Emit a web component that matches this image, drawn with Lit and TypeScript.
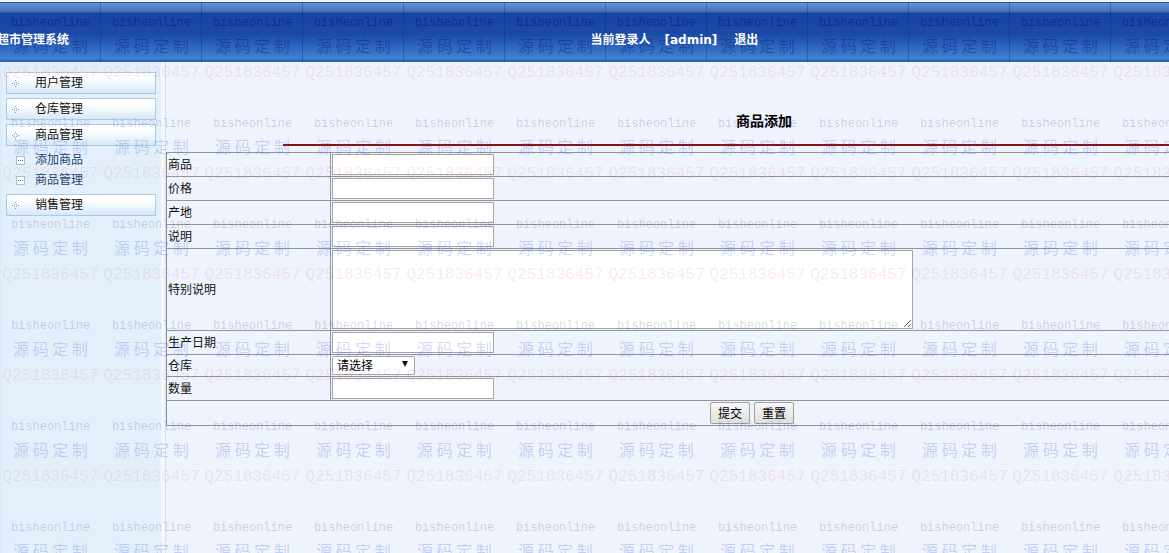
import { LitElement, html, css, svg } from "lit";
import { customElement, state } from "lit/decorators.js";

const leadingFields = [
  ["name", "商品"],
  ["price", "价格"],
  ["origin", "产地"],
  ["summary", "说明"],
];

const menu: { label: string; children: string[] }[] = [
  { label: "用户管理", children: [] },
  { label: "仓库管理", children: [] },
  { label: "商品管理", children: ["添加商品", "商品管理"] },
  { label: "销售管理", children: [] },
];

const TILE = 101;

@customElement("tiled-mark")
class TiledMark extends LitElement {
  static styles = css`
    :host {
      position: absolute;
      inset: 0;
      overflow: hidden;
      pointer-events: none;
    }
    .row {
      display: flex;
      height: 101px;
    }
    .tile {
      box-sizing: border-box;
      flex: 0 0 101px;
      display: flex;
      flex-direction: column;
      align-items: center;
      white-space: nowrap;
      padding-top: 15px;
    }
    .site {
      font: 12px/16px "Liberation Mono", monospace;
      color: rgba(30, 30, 120, 0.19);
    }
    .craft {
      font: oblique 8deg 16px/20px "Noto Sans CJK SC", sans-serif;
      margin-top: 4px;
      color: rgba(50, 80, 210, 0.23);
    }
    .contact {
      font: 16px/20px "Liberation Mono", monospace;
      margin-top: 8px;
      color: rgba(220, 20, 100, 0.11);
    }
    .row:first-child .site {
      color: rgba(5, 15, 90, 0.45);
    }
    .row:first-child .craft {
      color: rgba(5, 25, 120, 0.38);
    }
  `;
  @state() private columns = 0;
  @state() private rows = 0;
  private measure = () => {
    this.columns = Math.ceil(window.innerWidth / TILE);
    this.rows = Math.ceil(window.innerHeight / TILE);
  };
  connectedCallback() {
    super.connectedCallback();
    this.measure();
    window.addEventListener("resize", this.measure);
  }
  disconnectedCallback() {
    window.removeEventListener("resize", this.measure);
    super.disconnectedCallback();
  }
  render() {
    const tile = () => html`<div class="tile">
      <span class="site">bisheonline</span>
      <span class="craft">源 码 定 制</span>
      <span class="contact">Q251836457</span>
    </div>`;
    return Array.from(
      { length: this.rows },
      () => html`<div class="row">${Array.from({ length: this.columns }, tile)}</div>`
    );
  }
}

@customElement("side-menu")
class SideMenu extends LitElement {
  static styles = css`
    :host {
      display: block;
      box-sizing: border-box;
      padding: 10px 10px 0 6px;
      background: linear-gradient(90deg, #d6eafa 0, #e3f0fb 3px, #e3f0fb 160px, #f3f8fe 162px, #f3f8fe 165px, #d9e0ec 165px);
    }
    ul {
      list-style: none;
      margin: 0;
      padding: 0;
    }
    a {
      display: flex;
      align-items: center;
      text-decoration: none;
    }
    .head {
      box-sizing: border-box;
      height: 22px;
      margin-bottom: 4px;
      border: 1px solid #a9cbe6;
      background: linear-gradient(#fff 20%, #f4f9fd 50%, #d5e8f7);
      color: #111;
    }
    .head svg {
      width: 7px;
      height: 7px;
      margin: 0 16px 0 5px;
    }
    .sub {
      padding: 0 0 4px 10px;
    }
    .sub a {
      height: 20px;
      color: #1d4474;
    }
    .sub svg {
      width: 9px;
      height: 9px;
      margin-right: 10px;
    }
  `;
  render() {
    const dots = svg`<g fill="#7d97b8"><rect x="3" width="1" height="1"/><rect x="2" y="2" width="1" height="1"/><rect x="4" y="2" width="1" height="1"/><rect y="3" width="1" height="1"/><rect x="6" y="3" width="1" height="1"/><rect x="2" y="4" width="1" height="1"/><rect x="4" y="4" width="1" height="1"/><rect x="3" y="6" width="1" height="1"/></g>`;
    const box = svg`<rect x=".5" y=".5" width="8" height="8" fill="#fff" stroke="#a3c3df"/><g fill="#476a94"><rect x="2" y="4" width="1" height="1"/><rect x="4" y="4" width="1" height="1"/><rect x="6" y="4" width="1" height="1"/></g>`;
    return html`<nav>
      <ul>
        ${menu.map(
          (m) => html`<li>
            <a class="head" href="#"><svg viewBox="0 0 7 7">${dots}</svg>${m.label}</a>
            ${m.children.length
              ? html`<ul class="sub">
                  ${m.children.map((c) => html`<li><a href="#"><svg viewBox="0 0 9 9">${box}</svg>${c}</a></li>`)}
                </ul>`
              : ""}
          </li>`
        )}
      </ul>
    </nav>`;
  }
}

@customElement("product-form")
class ProductForm extends LitElement {
  static styles = css`
    :host {
      display: block;
      overflow: hidden;
    }
    form {
      width: calc(100vw + 3px);
    }
    h1 {
      margin: 0;
      padding: 49px 0 0 24px;
      font-size: 14px;
      line-height: 20px;
      text-align: center;
      color: #000;
    }
    hr {
      width: 80%;
      height: 2px;
      margin: 13px auto 6px;
      border: 0;
      background: #8b1014;
    }
    table {
      width: 100%;
      border-collapse: collapse;
      table-layout: fixed;
    }
    .labels {
      width: 14%;
    }
    th,
    td {
      height: 21px;
      padding: 1px;
      border: 1px solid #8e96a4;
      font-weight: normal;
      text-align: left;
      line-height: 16px;
    }
    input,
    textarea,
    select {
      display: block;
      box-sizing: border-box;
      margin: 0;
      border: 1px solid #a6a6a6;
      border-radius: 0;
      background: #fff;
      font: inherit;
      color: #000;
    }
    input {
      width: 162px;
      height: 21px;
      padding: 1px 2px;
    }
    textarea {
      width: 581px;
      height: 79px;
      resize: both;
    }
    .short {
      height: 19px;
    }
    .picker {
      position: relative;
      width: 83px;
    }
    select {
      width: 83px;
      height: 19px;
      padding: 1px 4px 0;
      line-height: 16px;
      appearance: none;
      border-radius: 2px;
    }
    .picker svg {
      position: absolute;
      right: 7px;
      top: 5px;
      width: 6px;
      height: 6px;
      pointer-events: none;
    }
    .actions {
      display: flex;
      justify-content: center;
      gap: 4px;
    }
    button {
      box-sizing: border-box;
      width: 40px;
      height: 22px;
      padding: 1px 0 0;
      border: 1px solid #a0a0a0;
      border-radius: 2px;
      background: linear-gradient(#f8f8f8, #dedede);
      font: inherit;
      color: #000;
    }
  `;
  row(id: string, label: string) {
    return html`<tr>
      <th scope="row"><label for=${id}>${label}</label></th>
      <td><input id=${id} name=${id} type="text" /></td>
    </tr>`;
  }
  render() {
    return html`<form @submit=${(e: Event) => e.preventDefault()}>
      <h1>商品添加</h1>
      <hr />
      <table>
        <colgroup><col class="labels" /><col /></colgroup>
        <tbody>
          ${leadingFields.map(([id, label]) => this.row(id, label))}
          <tr>
            <th scope="row"><label for="notes">特别说明</label></th>
            <td><textarea id="notes" name="notes"></textarea></td>
          </tr>
          ${this.row("date", "生产日期")}
          <tr>
            <th class="short" scope="row"><label for="store">仓库</label></th>
            <td class="short">
              <div class="picker">
                <select id="store" name="store"><option>请选择</option></select>
                <svg viewBox="0 0 6 6"><path d="M0 0H6L3 6Z" fill="#111" /></svg>
              </div>
            </td>
          </tr>
          ${this.row("amount", "数量")}
          <tr>
            <td colspan="2">
              <div class="actions">
                <button type="submit">提交</button>
                <button type="reset">重置</button>
              </div>
            </td>
          </tr>
        </tbody>
      </table>
    </form>`;
  }
}

@customElement("app-root")
class AppRoot extends LitElement {
  static styles = css`
    :host {
      position: relative;
      display: flex;
      flex-direction: column;
      min-height: 100vh;
      overflow: hidden;
      background: #eef3fc;
      font: 12px/16px "DejaVu Sans", "Noto Sans CJK SC", sans-serif;
      color: #111;
    }
    header {
      box-sizing: border-box;
      height: 62px;
      display: grid;
      grid-template-columns: 1fr 1fr;
      align-items: center;
      padding-top: 18px;
      font-weight: bold;
      color: #fff;
      background:
        linear-gradient(#eef3fc 2px, transparent 2px),
        repeating-linear-gradient(90deg, transparent 0 100px, rgba(10, 30, 110, 0.3) 100px 101px),
        linear-gradient(#2551a5 3px, #6d97d2 3px, #3e6cba 12px, #1844a2 13px, #1b49a7 34px, #3f82d2 59px, #2c63ba 60px);
    }
    .brand,
    .session {
      z-index: 1;
    }
    .brand {
      margin-left: -3px;
    }
    .session {
      display: flex;
      gap: 14px;
      padding-left: 6px;
    }
    .session a {
      color: inherit;
      text-decoration: none;
      padding-left: 3px;
    }
    .body {
      flex: 1;
      display: grid;
      grid-template-columns: 166px minmax(0, 1fr);
    }
  `;
  render() {
    return html`
      <header>
        <span class="brand">超市管理系统</span>
        <div class="session"><span>当前登录人</span><span>[admin]</span><a href="#">退出</a></div>
      </header>
      <div class="body">
        <side-menu></side-menu>
        <main><product-form></product-form></main>
      </div>
      <tiled-mark aria-hidden="true"></tiled-mark>
    `;
  }
}
